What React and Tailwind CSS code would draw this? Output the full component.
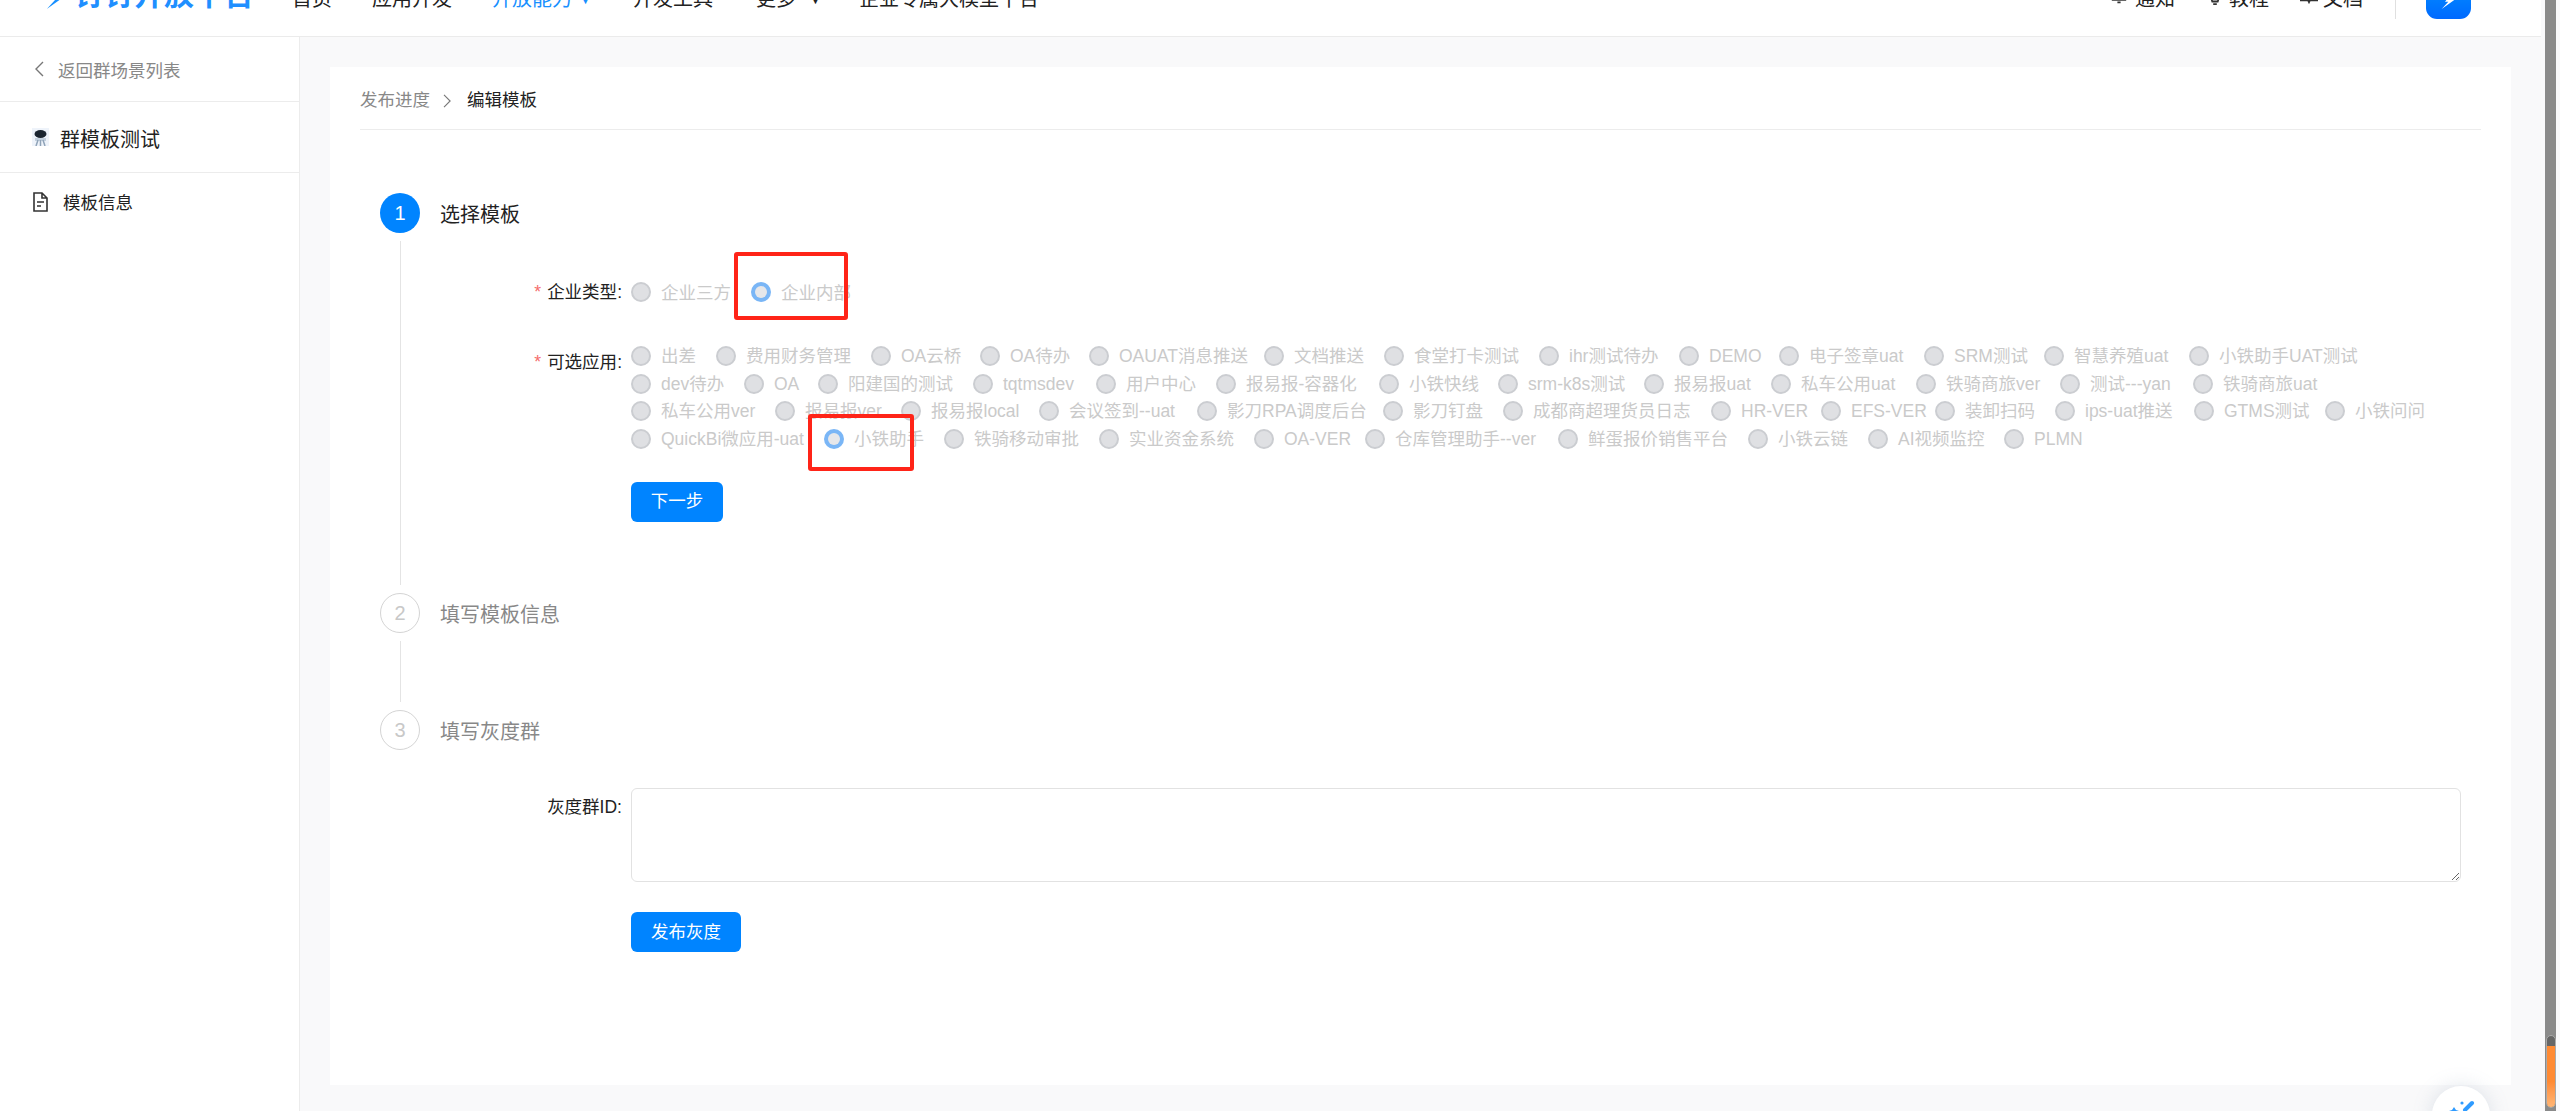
import React from "react";

const rows = [
  [["出差", "w-[85px]"], ["费用财务管理", "w-[155px]"], ["OA云桥", "w-[109px]"], ["OA待办", "w-[109px]"], ["OAUAT消息推送", "w-[175px]"], ["文档推送", "w-[120px]"], ["食堂打卡测试", "w-[155px]"], ["ihr测试待办", "w-[140px]"], ["DEMO", "w-[100px]"], ["电子签章uat", "w-[145px]"], ["SRM测试", "w-[120px]"], ["智慧养殖uat", "w-[145px]"], ["小铁助手UAT测试", "w-auto"]],
  [["dev待办", "w-[113px]"], ["OA", "w-[74px]"], ["阳建国的测试", "w-[155px]"], ["tqtmsdev", "w-[123px]"], ["用户中心", "w-[120px]"], ["报易报-容器化", "w-[163px]"], ["小铁快线", "w-[119px]"], ["srm-k8s测试", "w-[146px]"], ["报易报uat", "w-[127px]"], ["私车公用uat", "w-[145px]"], ["铁骑商旅ver", "w-[144px]"], ["测试---yan", "w-[133px]"], ["铁骑商旅uat", "w-auto"]],
  [["私车公用ver", "w-[144px]"], ["报易报ver", "w-[126px]"], ["报易报local", "w-[138px]"], ["会议签到--uat", "w-[158px]"], ["影刀RPA调度后台", "w-[186px]"], ["影刀钉盘", "w-[120px]"], ["成都商超理货员日志", "w-[208px]"], ["HR-VER", "w-[110px]"], ["EFS-VER", "w-[114px]"], ["装卸扫码", "w-[120px]"], ["ips-uat推送", "w-[139px]"], ["GTMS测试", "w-[131px]"], ["小铁问问", "w-auto"]],
  [["QuickBi微应用-uat", "w-[193px]"], ["小铁助手", "w-[120px]"], ["铁骑移动审批", "w-[155px]"], ["实业资金系统", "w-[155px]"], ["OA-VER", "w-[111px]"], ["仓库管理助手--ver", "w-[193px]"], ["鲜蛋报价销售平台", "w-[190px]"], ["小铁云链", "w-[120px]"], ["AI视频监控", "w-[136px]"], ["PLMN", "w-auto"]],
];

function Radio({ label, selected, widthClass }) {
  return (
    <span className={"flex items-center whitespace-nowrap shrink-0 " + widthClass}>
      {selected ? (
        <span className="w-5 h-5 rounded-full bg-[#7ab6f6] flex items-center justify-center shrink-0">
          <span className="w-3 h-3 rounded-full bg-[#e6e7ea]" />
        </span>
      ) : (
        <span className="w-5 h-5 rounded-full bg-[#dfe0e3] border-2 border-[#cbcdd1] shrink-0" />
      )}
      <span className="ml-[10px] mt-[2px] text-[#cacaca]">{label}</span>
    </span>
  );
}

function Bolt({ className, fill }) {
  return (
    <svg viewBox="0 0 24 24" className={className}>
      <path d="M17 0 L6 13 L11 13 L1 24 L22 9 L15 9 L21 0 Z" fill={fill} />
    </svg>
  );
}

function Label({ children, paddingClass }) {
  return (
    <div className={"w-[191px] shrink-0 pr-[9px] text-right text-[#222] leading-[28px] " + paddingClass}>
      <span className="text-[#f56c6c] mr-[6px]">*</span>
      {children}:
    </div>
  );
}

function Step({ num, title, active, children, last }) {
  return (
    <div className="flex">
      <div className="w-10 shrink-0 flex flex-col items-center">
        <div
          className={
            active
              ? "w-10 h-10 rounded-full bg-[#0084ff] text-white flex items-center justify-center text-[20px] shrink-0"
              : "w-10 h-10 rounded-full border border-[#d4d4d4] text-[#c8c8c8] flex items-center justify-center text-[20px] shrink-0"
          }
        >
          {num}
        </div>
        {!last && <div className="w-px flex-1 bg-[#e4e4e4] mt-2 mb-2" />}
      </div>
      <div className="ml-5 flex-1 min-w-0">
        <div className={active ? "h-10 leading-[44px] text-[20px] text-[#222]" : "h-10 leading-[44px] text-[20px] text-[#888]"}>{title}</div>
        {children}
      </div>
    </div>
  );
}

export default function App() {
  return (
    <div className="relative w-[2560px] h-[1111px] overflow-hidden bg-white flex font-['Liberation_Sans','Noto_Sans_CJK_SC',sans-serif] text-[17.5px]">
      <div className="w-[2541px] h-full flex flex-col shrink-0">
        <header className="h-[37px] shrink-0 border-b border-[#ebebeb] overflow-hidden bg-white">
          <div className="h-[64px] -mt-[33px] flex items-center pl-[46px] text-[20px] text-[#222]">
            <Bolt className="w-[20px] h-[26px] shrink-0" fill="#1890ff" />
            <span className="ml-2 -mt-[8px] w-[218px] shrink-0 text-[30px] font-bold text-[#1f8fff] leading-none">钉钉开放平台</span>
            <span className="w-[80px] shrink-0">首页</span>
            <span className="w-[120px] shrink-0">应用开发</span>
            <span className="w-[141px] shrink-0 text-[#1890ff]">开放能力 <span className="text-[10px] align-middle ml-[3px]">▼</span></span>
            <span className="w-[123px] shrink-0">开发工具</span>
            <span className="w-[103px] shrink-0">更多 <span className="text-[10px] align-middle ml-[9px]">▼</span></span>
            <span className="shrink-0">企业专属大模型平台</span>
            <div className="flex-1" />
            <svg viewBox="0 0 20 20" className="w-[16px] h-[18px] shrink-0 mr-[8px] -mt-[6px]" fill="none" stroke="#333" strokeWidth="2">
              <path d="M4 14 V8 a6 6 0 0 1 12 0 V14 M1 15 H19 M8 18 H12" />
            </svg>
            <span className="w-[73px] shrink-0">通知</span>
            <svg viewBox="0 0 14 20" className="w-[14px] h-[18px] shrink-0 mr-[7px] -mt-[4px]" fill="none" stroke="#333" strokeWidth="2">
              <path d="M3 12 a5.5 5.5 0 1 1 8 0 L10 15 H4 Z M5 18 H9" />
            </svg>
            <span className="w-[71px] shrink-0">教程</span>
            <svg viewBox="0 0 20 20" className="w-[18px] h-[18px] shrink-0 mr-[5px] -mt-[8px]" fill="none" stroke="#333" strokeWidth="2">
              <path d="M1 3 H9 L10 5 L11 3 H19 V16 H11 L10 18 L9 16 H1 Z M10 5 V18" />
            </svg>
            <span className="w-[72px] shrink-0">文档</span>
            <span className="w-px h-[40px] bg-[#e0e0e0] shrink-0" />
            <div className="ml-[30px] w-[45px] h-[52px] shrink-0 rounded-[11px] bg-gradient-to-b from-[#1a9bff] to-[#0069ff] flex items-end justify-center pb-[6px] -translate-y-[6px]">
              <Bolt className="w-[16px] h-[24px]" fill="#ffffff" />
            </div>
            <div className="w-[70px] shrink-0" />
          </div>
        </header>
        <div className="flex-1 flex min-h-0 bg-[#f9f9fa]">
          <aside className="w-[300px] shrink-0 bg-white border-r border-[#ececec]">
            <div className="h-[65px] border-b border-[#ececec] flex items-center pl-[34px] text-[#888]">
              <svg viewBox="0 0 10 16" className="w-[10px] h-[16px] shrink-0" fill="none" stroke="#777" strokeWidth="1.4">
                <path d="M9 1 L2 8 L9 15" />
              </svg>
              <span className="ml-[14px] mt-[4px]">返回群场景列表</span>
            </div>
            <div className="h-[71px] border-b border-[#ececec] flex items-center pl-[32px] text-[20px] text-[#222]">
              <svg viewBox="0 0 17 18" className="w-[17px] h-[18px] shrink-0">
                <rect x="0" y="0" width="17" height="18" fill="#eef3fa" />
                <ellipse cx="8.5" cy="6" rx="6" ry="4" fill="#1b2530" />
                <rect x="3" y="10" width="11" height="3" fill="#c3d0de" />
                <path d="M4 18 L6 12 M13 18 L11 12 M8.5 18 V12" stroke="#8fa3b8" strokeWidth="1.5" />
              </svg>
              <span className="ml-[11px] mt-[5px]">群模板测试</span>
            </div>
            <div className="h-[58px] flex items-center pl-[33px] text-[#222]">
              <svg viewBox="0 0 15 20" className="w-[15px] h-[20px] shrink-0" fill="none" stroke="#333" strokeWidth="1.6">
                <path d="M1 1 H9 L14 6 V19 H1 Z M9 1 V6 H14" />
                <path d="M4 10 H11 M4 14 H8" />
              </svg>
              <span className="ml-[15px] mt-[2px]">模板信息</span>
            </div>
          </aside>
          <main className="flex-1 min-w-0 pt-[30px] pl-[30px] pr-[30px] pb-[26px]">
            <div className="h-full bg-white px-[30px]">
              <div className="h-[63px] border-b border-[#ececec] flex items-center text-[#888] pt-[5px]">
                <span>发布进度</span>
                <svg viewBox="0 0 10 16" className="w-[9px] h-[14px] ml-[13px] mr-[15px] shrink-0" fill="none" stroke="#777" strokeWidth="1.3">
                  <path d="M1 1 L8 8 L1 15" />
                </svg>
                <span className="text-[#222]">编辑模板</span>
              </div>
              <div className="mt-[63px] px-[20px]">
                <Step num="1" title="选择模板" active>
                  <div className="flex mt-[37px]">
                    <Label paddingClass="pt-[8px]">企业类型</Label>
                    <div className="flex leading-[28px] pt-[7px]">
                      <Radio label="企业三方" widthClass="w-[120px]" />
                      <Radio label="企业内部" selected widthClass="w-auto" />
                    </div>
                  </div>
                  <div className="flex mt-[35px]">
                    <Label paddingClass="pt-[6px]">可选应用</Label>
                    <div className="leading-[27.7px]">
                      {rows.map((row, i) => (
                        <div key={i} className="flex h-[27.7px]">
                          {row.map(([name, widthClass]) => (
                            <Radio key={name} label={name} widthClass={widthClass} selected={i === 3 && name === "小铁助手"} />
                          ))}
                        </div>
                      ))}
                      <button className="mt-[29px] w-[92px] h-10 rounded-[6px] bg-[#0084ff] text-white block">下一步</button>
                    </div>
                  </div>
                  <div className="h-[71px]" />
                </Step>
                <Step num="2" title="填写模板信息">
                  <div className="h-[77px]" />
                </Step>
                <Step num="3" title="填写灰度群" last>
                  <div className="flex mt-[38px]">
                    <div className="w-[191px] shrink-0 pr-[9px] text-right text-[#222] pt-[5px] leading-[28px]">灰度群ID:</div>
                    <div className="flex-1">
                      <textarea className="block w-full h-[94px] border border-[#e2e2e2] rounded-[6px] resize-y outline-none" />
                      <button className="mt-[30px] w-[110px] h-10 rounded-[6px] bg-[#0084ff] text-white block">发布灰度</button>
                    </div>
                  </div>
                </Step>
              </div>
            </div>
          </main>
        </div>
      </div>
      <div className="flex-1 bg-[#f9f9fb] px-[4px]">
        <div className="relative w-[11px] h-full bg-[#8a8a8a]">
          <div className="absolute left-[1px] right-0 bottom-[3px] h-[73px] rounded-full border border-[#aaa] bg-[#666] overflow-hidden">
            <div className="mt-[10px] h-full bg-gradient-to-b from-[#ff8a33] via-[#ff8a33] to-[#ffc58a]" />
          </div>
        </div>
      </div>

      <div className="absolute left-[734px] top-[252px] w-[114px] h-[68px] border-[4px] border-[#ff2418] rounded-[3px]" />
      <div className="absolute left-[808px] top-[414px] w-[106px] h-[57px] border-[4px] border-[#ff2418] rounded-[3px]" />

      <div className="absolute left-[2432px] top-[1086px] w-[58px] h-[58px] rounded-full bg-white shadow-[0_0_20px_rgba(120,140,170,0.22)]">
        <svg viewBox="0 0 58 30" className="absolute left-0 top-0 w-[58px] h-[30px]">
          <path d="M33 24 L40 17" stroke="#2f9bff" strokeWidth="4" strokeLinecap="round" />
          <path d="M22 21 L24 24 L27 25 L24 26 L22 29 L20 26 L17 25 L20 24 Z" fill="#2f9bff" />
          <circle cx="30" cy="17" r="1.6" fill="#2f9bff" />
        </svg>
      </div>
    </div>
  );
}
